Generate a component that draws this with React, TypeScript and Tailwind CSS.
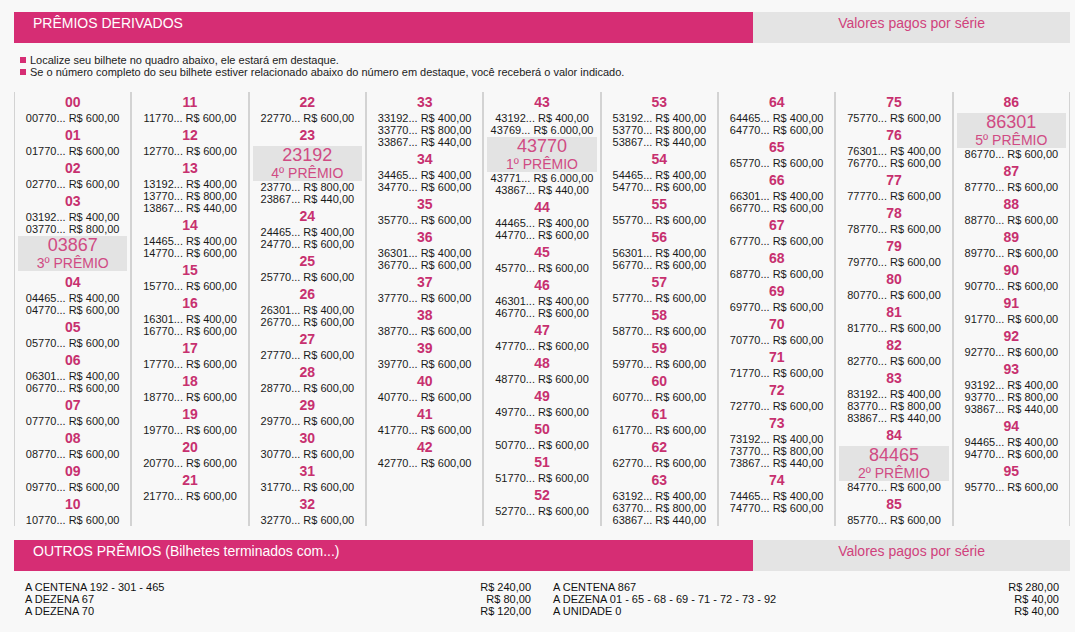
type Line = { n: string; v: string } | { box: string; label: string }
type Group = { d: string; lines: Line[] }

const s = (n: string, v = "600,00"): Line => ({ n, v })
const box = (b: string, label: string): Line => ({ box: b, label })
const single = (d: string): Group => ({ d, lines: [s(`${d}770`)] })

const columns: Group[][] = [
  [
    single("00"),
    single("01"),
    single("02"),
    { d: "03", lines: [s("03192", "400,00"), s("03770", "800,00"), box("03867", "3º PRÊMIO")] },
    { d: "04", lines: [s("04465", "400,00"), s("04770")] },
    single("05"),
    { d: "06", lines: [s("06301", "400,00"), s("06770")] },
    single("07"),
    single("08"),
    single("09"),
    single("10"),
  ],
  [
    single("11"),
    single("12"),
    { d: "13", lines: [s("13192", "400,00"), s("13770", "800,00"), s("13867", "440,00")] },
    { d: "14", lines: [s("14465", "400,00"), s("14770")] },
    single("15"),
    { d: "16", lines: [s("16301", "400,00"), s("16770")] },
    single("17"),
    single("18"),
    single("19"),
    single("20"),
    single("21"),
  ],
  [
    single("22"),
    { d: "23", lines: [box("23192", "4º PRÊMIO"), s("23770", "800,00"), s("23867", "440,00")] },
    { d: "24", lines: [s("24465", "400,00"), s("24770")] },
    single("25"),
    { d: "26", lines: [s("26301", "400,00"), s("26770")] },
    single("27"),
    single("28"),
    single("29"),
    single("30"),
    single("31"),
    single("32"),
  ],
  [
    { d: "33", lines: [s("33192", "400,00"), s("33770", "800,00"), s("33867", "440,00")] },
    { d: "34", lines: [s("34465", "400,00"), s("34770")] },
    single("35"),
    { d: "36", lines: [s("36301", "400,00"), s("36770")] },
    single("37"),
    single("38"),
    single("39"),
    single("40"),
    single("41"),
    single("42"),
  ],
  [
    {
      d: "43",
      lines: [
        s("43192", "400,00"),
        s("43769", "6.000,00"),
        box("43770", "1º PRÊMIO"),
        s("43771", "6.000,00"),
        s("43867", "440,00"),
      ],
    },
    { d: "44", lines: [s("44465", "400,00"), s("44770")] },
    single("45"),
    { d: "46", lines: [s("46301", "400,00"), s("46770")] },
    single("47"),
    single("48"),
    single("49"),
    single("50"),
    single("51"),
    single("52"),
  ],
  [
    { d: "53", lines: [s("53192", "400,00"), s("53770", "800,00"), s("53867", "440,00")] },
    { d: "54", lines: [s("54465", "400,00"), s("54770")] },
    single("55"),
    { d: "56", lines: [s("56301", "400,00"), s("56770")] },
    single("57"),
    single("58"),
    single("59"),
    single("60"),
    single("61"),
    single("62"),
    { d: "63", lines: [s("63192", "400,00"), s("63770", "800,00"), s("63867", "440,00")] },
  ],
  [
    { d: "64", lines: [s("64465", "400,00"), s("64770")] },
    single("65"),
    { d: "66", lines: [s("66301", "400,00"), s("66770")] },
    single("67"),
    single("68"),
    single("69"),
    single("70"),
    single("71"),
    single("72"),
    { d: "73", lines: [s("73192", "400,00"), s("73770", "800,00"), s("73867", "440,00")] },
    { d: "74", lines: [s("74465", "400,00"), s("74770")] },
  ],
  [
    single("75"),
    { d: "76", lines: [s("76301", "400,00"), s("76770")] },
    single("77"),
    single("78"),
    single("79"),
    single("80"),
    single("81"),
    single("82"),
    { d: "83", lines: [s("83192", "400,00"), s("83770", "800,00"), s("83867", "440,00")] },
    { d: "84", lines: [box("84465", "2º PRÊMIO"), s("84770")] },
    single("85"),
  ],
  [
    { d: "86", lines: [box("86301", "5º PRÊMIO"), s("86770")] },
    single("87"),
    single("88"),
    single("89"),
    single("90"),
    single("91"),
    single("92"),
    { d: "93", lines: [s("93192", "400,00"), s("93770", "800,00"), s("93867", "440,00")] },
    { d: "94", lines: [s("94465", "400,00"), s("94770")] },
    single("95"),
  ],
]

const outros = {
  left: [
    ["A CENTENA 192 - 301 - 465", "R$ 240,00"],
    ["A DEZENA 67", "R$ 80,00"],
    ["A DEZENA 70", "R$ 120,00"],
  ],
  right: [
    ["A CENTENA 867", "R$ 280,00"],
    ["A DEZENA 01 - 65 - 68 - 69 - 71 - 72 - 73 - 92", "R$ 40,00"],
    ["A UNIDADE 0", "R$ 40,00"],
  ],
}

function SectionBar({ title }: { title: string }) {
  return (
    <div className="flex h-[31px]">
      <div className="w-[70%] bg-[#d62d74] pl-[19px] pt-[3px] text-[14px] leading-[17px] text-white">{title}</div>
      <div className="w-[30%] bg-[#e4e4e4] pt-[3px] text-center text-[14px] leading-[17px] text-[#d0427c]">
        Valores pagos por série
      </div>
    </div>
  )
}

function GroupBlock({ group }: { group: Group }) {
  return (
    <div>
      <div className="pb-[2px] text-center text-[14px] font-bold leading-[16px] text-[#c7306f]">{group.d}</div>
      {group.lines.map((line, i) =>
        "box" in line ? (
          <div key={i} className="mx-[3px] mt-[1px] h-[35px] bg-[#e3e3e3] text-center text-[#d04b83]">
            <div className="text-[18px] leading-[19px]">{line.box}</div>
            <div className="text-[14px] leading-[16px]">{line.label}</div>
          </div>
        ) : (
          <div key={i} className="whitespace-nowrap text-center text-[11px] leading-[12px] text-[#1a1a1a]">
            {line.n}... R$ {line.v}
          </div>
        )
      )}
    </div>
  )
}

export default function App() {
  return (
    <div className="min-h-[632px] bg-[#f8f8f8] pt-[12px] font-['Liberation_Sans',Arial,sans-serif]">
      <div className="ml-[14px] w-[1056px]">
        <SectionBar title="PRÊMIOS DERIVADOS" />

        <div className="mt-[11px] pl-[6px] text-[11px] leading-[12px] text-[#222]">
          <div className="flex items-center gap-[4px]">
            <span className="h-[6px] w-[6px] bg-[#d62d74]" />
            Localize seu bilhete no quadro abaixo, ele estará em destaque.
          </div>
          <div className="flex items-center gap-[4px]">
            <span className="h-[6px] w-[6px] bg-[#d62d74]" />
            Se o número completo do seu bilhete estiver relacionado abaixo do número em destaque, você receberá o valor
            indicado.
          </div>
        </div>

        <div className="mt-[14px] grid grid-cols-9">
          {columns.map((col, i) => (
            <div key={i} className="flex flex-col gap-[3px] border-x border-[#d3d3d3] pt-[2px]">
              {col.map((g) => (
                <GroupBlock key={g.d} group={g} />
              ))}
            </div>
          ))}
        </div>

        <div className="mt-[14px]">
          <SectionBar title="OUTROS PRÊMIOS (Bilhetes terminados com...)" />
        </div>

        <div className="mt-[10px] grid grid-cols-2 text-[11px] leading-[12px] text-[#111]">
          {[outros.left, outros.right].map((rows, i) => (
            <div key={i} className="px-[11px]">
              {rows.map(([label, value]) => (
                <div key={label} className="flex justify-between">
                  <span>{label}</span>
                  <span>{value}</span>
                </div>
              ))}
            </div>
          ))}
        </div>
      </div>
    </div>
  )
}
